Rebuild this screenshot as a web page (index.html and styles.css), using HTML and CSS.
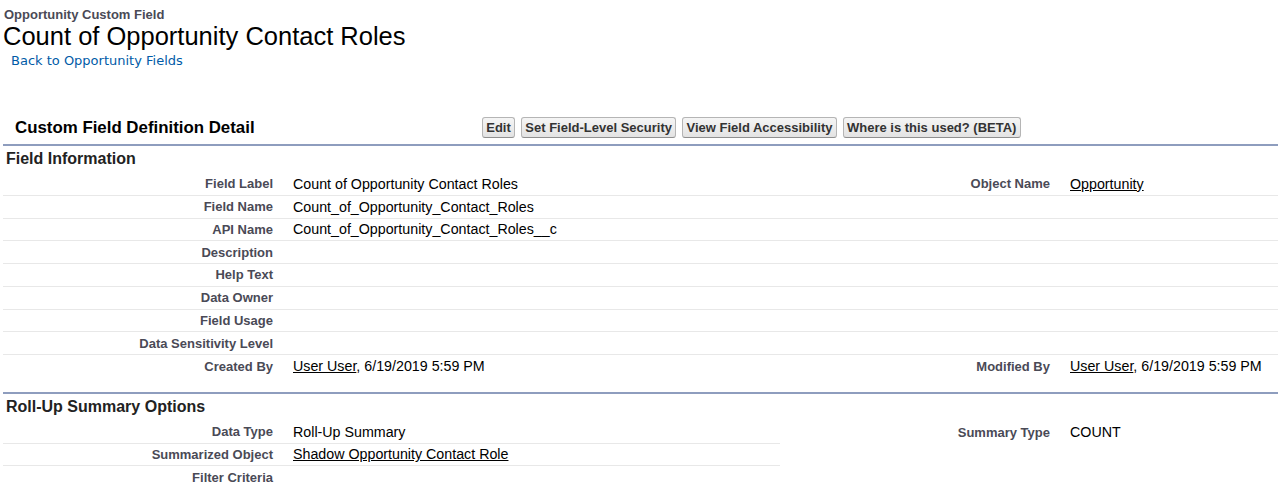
FILE: index.html
```html
<!DOCTYPE html>
<html>
<head>
<meta charset="utf-8">
<title>Count of Opportunity Contact Roles</title>
<link rel="stylesheet" href="styles.css">
</head>
<body>
<div class="page-header">
  <div class="page-type">Opportunity Custom Field</div>
  <h1 class="page-title">Count of Opportunity Contact Roles</h1>
  <a class="breadcrumb" href="#">Back to Opportunity Fields</a>
</div>

<div class="block">
  <div class="pb-header">
    <h2 class="pb-title">Custom Field Definition Detail</h2>
    <div class="pb-buttons">
      <button class="btn">Edit</button>
      <button class="btn">Set Field-Level Security</button>
      <button class="btn">View Field Accessibility</button>
      <button class="btn">Where is this used? (BETA)</button>
    </div>
  </div>

  <div class="subsection">
    <h3 class="sub-title">Field Information</h3>
    <table class="detail">
      <colgroup><col class="c-label"><col class="c-data"><col class="c-label"><col class="c-data2"></colgroup>
      <tr><td class="label">Field Label</td><td class="data">Count of Opportunity Contact Roles</td><td class="label">Object Name</td><td class="data"><a href="#">Opportunity</a></td></tr>
      <tr><td class="label">Field Name</td><td class="data">Count_of_Opportunity_Contact_Roles</td><td class="label"></td><td class="data"></td></tr>
      <tr><td class="label">API Name</td><td class="data">Count_of_Opportunity_Contact_Roles__c</td><td class="label"></td><td class="data"></td></tr>
      <tr><td class="label">Description</td><td class="data"></td><td class="label"></td><td class="data"></td></tr>
      <tr><td class="label">Help Text</td><td class="data"></td><td class="label"></td><td class="data"></td></tr>
      <tr><td class="label">Data Owner</td><td class="data"></td><td class="label"></td><td class="data"></td></tr>
      <tr><td class="label">Field Usage</td><td class="data"></td><td class="label"></td><td class="data"></td></tr>
      <tr><td class="label">Data Sensitivity Level</td><td class="data"></td><td class="label"></td><td class="data"></td></tr>
      <tr class="last"><td class="label">Created By</td><td class="data"><a href="#">User User</a>, 6/19/2019 5:59 PM</td><td class="label">Modified By</td><td class="data"><a href="#">User User</a>, 6/19/2019 5:59 PM</td></tr>
    </table>
  </div>

  <div class="subsection">
    <h3 class="sub-title">Roll-Up Summary Options</h3>
    <table class="detail">
      <colgroup><col class="c-label"><col class="c-data"><col class="c-label"><col class="c-data2"></colgroup>
      <tr><td class="label">Data Type</td><td class="data">Roll-Up Summary</td><td class="label nb">Summary Type</td><td class="data nb">COUNT</td></tr>
      <tr><td class="label">Summarized Object</td><td class="data"><a href="#">Shadow Opportunity Contact Role</a></td><td class="label nb"></td><td class="data nb"></td></tr>
      <tr class="last"><td class="label">Filter Criteria</td><td class="data"></td><td class="label nb"></td><td class="data nb"></td></tr>
    </table>
  </div>
</div>
</body>
</html>
```

FILE: styles.css
```css
html, body {
  margin: 0;
  padding: 0;
  background: #fff;
}

body {
  font-family: "Liberation Sans", Arial, sans-serif;
  color: #000;
}

.page-header {
  padding-top: 6px;
}

.page-type {
  padding-left: 4px;
  font-size: 13px;
  font-weight: bold;
  line-height: 17px;
  color: #4a4a56;
}

.page-title {
  margin: 0;
  padding-left: 3px;
  font-size: 25.5px;
  font-weight: normal;
  line-height: 27px;
  color: #000;
}

.breadcrumb {
  display: block;
  margin-top: 3px;
  padding-left: 11px;
  font-family: "DejaVu Sans", Verdana, sans-serif;
  font-size: 13px;
  line-height: 16px;
  color: #015ba7;
  text-decoration: none;
}

.block {
  margin-top: 44px;
  padding-left: 3px;
}

.pb-header {
  display: flex;
  align-items: center;
  padding: 4px 0 6px;
}

.pb-title {
  margin: 0;
  width: 467px;
  padding-left: 12px;
  font-size: 16.85px;
  font-weight: bold;
  line-height: 21px;
  color: #000;
}

.pb-buttons {
  display: flex;
  gap: 6px;
}

.btn {
  height: 21px;
  margin: 0;
  padding: 0 3.25px;
  font-family: "Liberation Sans", Arial, sans-serif;
  font-size: 13px;
  font-weight: bold;
  line-height: 19px;
  color: #333;
  background: linear-gradient(#f5f5f5, #e3e3e3);
  border: 1px solid #b5b5b5;
  border-bottom-color: #8f8f8f;
  border-radius: 3px;
}

.subsection {
  border-top: 2px solid #8e9dbe;
}

.subsection + .subsection {
  margin-top: 14px;
}

.sub-title {
  margin: 0;
  padding: 3px 3px 5px;
  font-size: 16px;
  font-weight: bold;
  line-height: 19px;
  color: #222;
}

.detail {
  width: 1275px;
  border-collapse: separate;
  border-spacing: 0;
  table-layout: fixed;
}

.c-label { width: 280px; }
.c-data { width: 497px; }
.c-data2 { width: 218px; }

.detail td {
  height: 22.75px;
  padding: 0 10px;
  border-bottom: 1px solid #e8e8e8;
  vertical-align: middle;
  white-space: nowrap;
  box-sizing: border-box;
}

.detail tr.last td,
.detail td.nb {
  border-bottom: none;
}

.detail td.label {
  text-align: right;
  font-size: 13px;
  font-weight: bold;
  color: #4a4a56;
}

.detail td.data {
  text-align: left;
  font-size: 14.25px;
  color: #000;
}

.detail a {
  color: #000;
  text-decoration: underline;
}
```
